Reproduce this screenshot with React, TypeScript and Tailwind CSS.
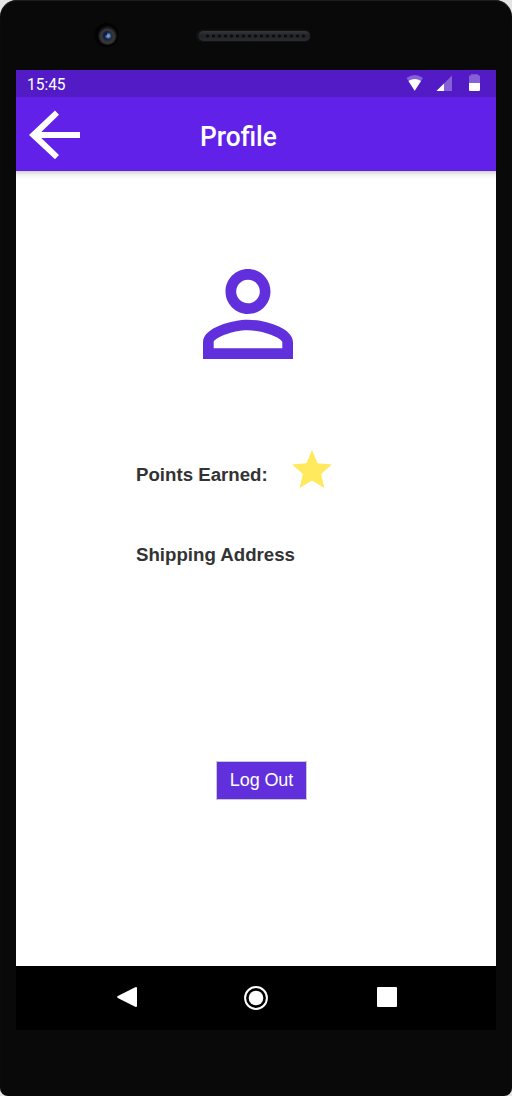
import React from "react";

function PhoneTop() {
  return (
    <div className="flex h-[70px] shrink-0">
      <svg viewBox="0 0 512 70" className="h-[70px] w-[512px]">
        <defs>
          <radialGradient id="lens" cx="0.5" cy="0.55" r="0.5">
            <stop offset="0" stopColor="#18202c" />
            <stop offset="0.35" stopColor="#25282e" />
            <stop offset="0.7" stopColor="#38393c" />
            <stop offset="1" stopColor="#101011" />
          </radialGradient>
          <radialGradient id="glint" cx="0.5" cy="0.5" r="0.5">
            <stop offset="0" stopColor="#8db4e6" />
            <stop offset="0.5" stopColor="#5b83c4" />
            <stop offset="1" stopColor="#22365c" />
          </radialGradient>
          <linearGradient id="speaker" x1="0" y1="0" x2="0" y2="1">
            <stop offset="0" stopColor="#36373a" />
            <stop offset="0.45" stopColor="#222326" />
            <stop offset="1" stopColor="#2b2c30" />
          </linearGradient>
        </defs>
        <circle cx="106.5" cy="35" r="12" fill="#030303" />
        <circle cx="107.5" cy="35.5" r="9.5" fill="url(#lens)" />
        <circle cx="107" cy="35.2" r="4.2" fill="#142040" />
        <circle cx="108.2" cy="35.8" r="3.2" fill="url(#glint)" />
        <circle cx="105.8" cy="34" r="1.5" fill="#101a3c" />
        <rect x="196" y="29.5" width="115" height="12.5" rx="6.2" fill="#111214" />
        <rect x="198.5" y="31" width="111.5" height="10" rx="5" fill="url(#speaker)" />
        <path d="M207.5 36H305" stroke="#0b0b0d" strokeWidth="3.2" strokeLinecap="round" strokeDasharray="0 6" />
      </svg>
    </div>
  );
}

function StatusBar() {
  return (
    <div className="flex h-[27px] shrink-0 items-center justify-between bg-[#531bc6] pl-[11px]">
      <span className="origin-left scale-x-[0.91] pt-px font-['Roboto',sans-serif] text-[17px] leading-6 text-white">15:45</span>
      <svg viewBox="0 0 96 27" className="h-[27px] w-24" fill="#fff">
        <path d="M6.5 8Q14.7 2.2 23 8L14.7 20.8Z" opacity="0.3" />
        <path d="M8.5 11Q14.7 7.2 21 11L14.7 20.8Z" />
        <path d="M52 5.5V21H36.5Z" opacity="0.3" />
        <path d="M44 13.5V21H36.5Z" />
        <path d="M71 4.3h7v1.2h2V13H69V5.5h2Z" opacity="0.3" />
        <path d="M69 13h11v6.7q0 1.3-1.3 1.3h-8.4q-1.3 0-1.3-1.3Z" />
      </svg>
    </div>
  );
}

function AppBar() {
  return (
    <header className="flex h-[74px] shrink-0 items-center bg-[#6121e9] pl-[13px]">
      <button aria-label="Back" className="shrink-0 pt-0.5">
        <svg viewBox="0 0 52 50" className="h-[50px] w-[52px]" fill="#fff">
          <path d="M26 .5 30 4.7 12.3 22H51v6H12.3L30 45.1 26 49.3 0 25Z" />
        </svg>
      </button>
      <h1 className="ml-[119px] origin-left scale-x-[0.94] pt-[5px] font-['Roboto',sans-serif] text-[28px] leading-8 font-medium text-white">
        Profile
      </h1>
    </header>
  );
}

function ProfileScreen() {
  return (
    <main className="flex flex-1 flex-col bg-white font-['Liberation_Sans',Arial,sans-serif] text-[#333]">
      <div className="h-2 shrink-0 bg-linear-to-b from-[#d2d2d2] via-[#f3f3f3] to-white" />
      <svg viewBox="4 4 16 16" className="mt-[90px] ml-[187px] h-[90px] w-[90px] shrink-0" fill="#612fdb">
        <path d="M12 5.9a2.1 2.1 0 1 1 0 4.2 2.1 2.1 0 0 1 0-4.2m0 9c2.97 0 6.1 1.46 6.1 2.1v1.1H5.9V17c0-.64 3.13-2.1 6.1-2.1M12 4C9.79 4 8 5.79 8 8s1.79 4 4 4 4-1.79 4-4-1.79-4-4-4m0 9c-2.67 0-8 1.34-8 4v3h16v-3c0-2.66-5.33-4-8-4" />
      </svg>
      <div className="mt-[90px] ml-[120px] flex h-10 items-start">
        <span className="w-[155.5px] pt-3 text-[18.67px] leading-[27px] font-bold">Points Earned:</span>
        <svg viewBox="2 2 20 19" className="mt-px h-[38px] w-10" fill="#ffe95c">
          <path d="M12 17.27 18.18 21l-1.64-7.03L22 9.24l-7.19-.61L12 2 9.19 8.63 2 9.24l5.46 4.73L5.82 21Z" />
        </svg>
      </div>
      <h2 className="mt-[52px] ml-[120px] text-[18.67px] leading-[27px] font-bold">Shipping Address</h2>
      <button className="mt-[193px] ml-[200px] flex h-[39px] w-[91px] items-center justify-center border border-[#c9c9c9] bg-[#612fdb] pb-0.5 text-[18px] leading-6 tracking-[-0.1px] text-white">
        Log Out
      </button>
    </main>
  );
}

function NavigationBar() {
  return (
    <nav className="flex h-16 shrink-0 items-start bg-black pt-5 pl-[100px]">
      <svg viewBox="0 0 22 22" className="h-[22px] w-[22px]" fill="#fff">
        <path d="M1.8 10 19.2 1.2Q21 .7 21 2v18q0 1.3-1.8.8L1.8 12.1Q.2 11 1.8 10" />
      </svg>
      <svg viewBox="0 0 24 24" className="ml-[106px] h-6 w-6" fill="#fff">
        <circle cx="12" cy="12" r="10.9" fill="none" stroke="#fff" strokeWidth="2" />
        <circle cx="12" cy="12" r="7.3" />
      </svg>
      <div className="mt-px ml-[109px] h-5 w-5 rounded-[1px] bg-white" />
    </nav>
  );
}

export default function App() {
  return (
    <div className="h-[1096px] w-[512px] bg-[#e4e4e4]">
      <div className="flex h-full flex-col overflow-hidden rounded-t-[17px] rounded-b-[8px] bg-[#090909] shadow-[inset_0_1px_1px_#222]">
        <PhoneTop />
        <div className="mx-4 flex h-[960px] shrink-0 flex-col">
          <StatusBar />
          <AppBar />
          <ProfileScreen />
          <NavigationBar />
        </div>
      </div>
    </div>
  );
}
